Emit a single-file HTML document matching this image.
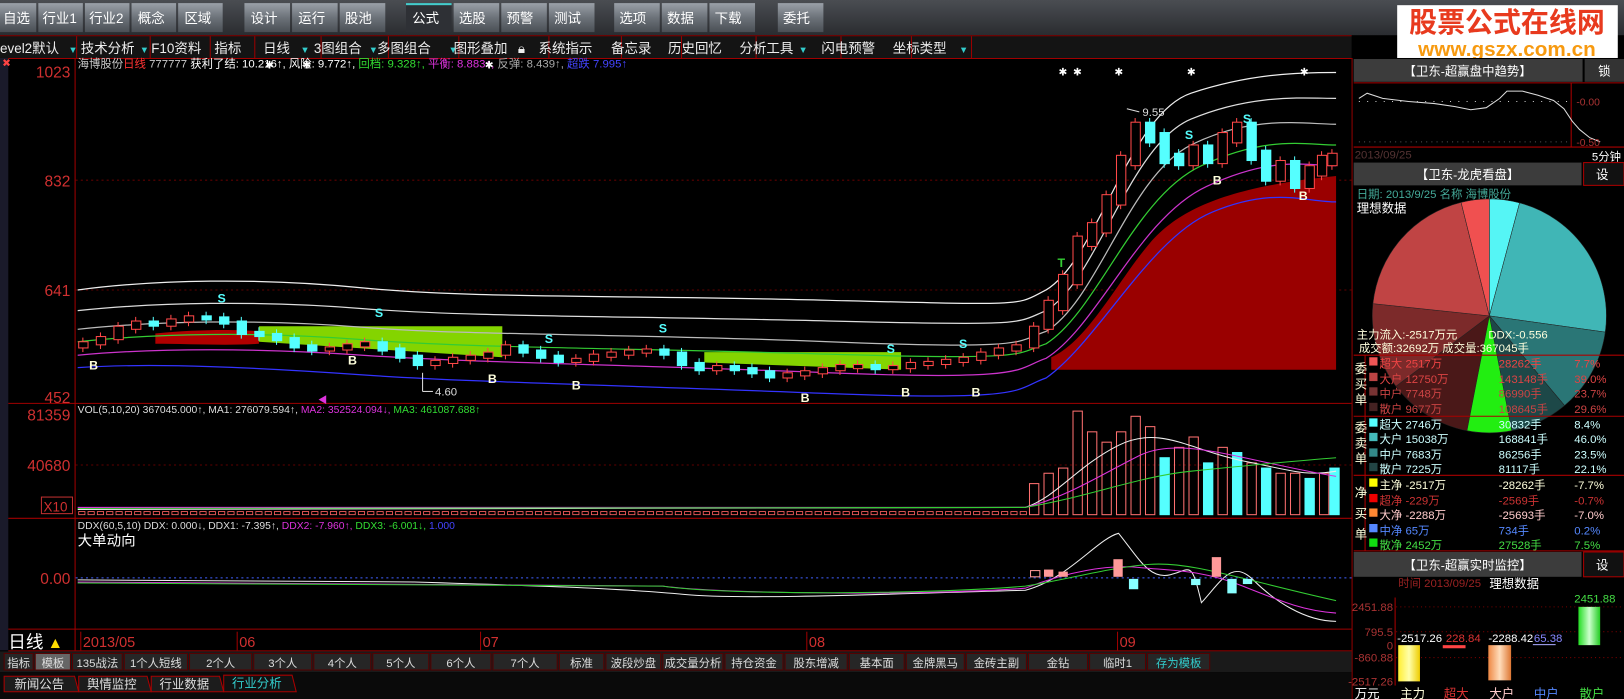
<!DOCTYPE html>
<html><head><meta charset="utf-8">
<style>
html,body{margin:0;padding:0;background:#000;overflow:hidden}
svg{display:block}
text{font-family:"Liberation Sans","Noto Sans CJK SC",sans-serif}
</style></head>
<body>
<svg id="s" width="1624" height="699" viewBox="0 0 1568 675" preserveAspectRatio="none" xmlns="http://www.w3.org/2000/svg">
<defs>
<linearGradient id="btn" x1="0" y1="0" x2="0" y2="1"><stop offset="0" stop-color="#9aa0a8"/><stop offset="0.5" stop-color="#6c7279"/><stop offset="1" stop-color="#4a4f55"/></linearGradient>
<linearGradient id="tb" x1="0" y1="0" x2="0" y2="1"><stop offset="0" stop-color="#4a4d52"/><stop offset="1" stop-color="#2a2c30"/></linearGradient>
<linearGradient id="yb" x1="0" y1="0" x2="1" y2="0"><stop offset="0" stop-color="#ffee33"/><stop offset="0.5" stop-color="#ffffaa"/><stop offset="1" stop-color="#eecc00"/></linearGradient>
<linearGradient id="ob" x1="0" y1="0" x2="1" y2="0"><stop offset="0" stop-color="#ee8844"/><stop offset="0.5" stop-color="#ffddbb"/><stop offset="1" stop-color="#dd7733"/></linearGradient>
<linearGradient id="gb" x1="0" y1="0" x2="1" y2="0"><stop offset="0" stop-color="#22dd22"/><stop offset="0.5" stop-color="#ccffcc"/><stop offset="1" stop-color="#22cc22"/></linearGradient>
</defs>
<!-- top toolbar -->
<rect x="0" y="0" width="1568" height="34" fill="url(#tb)"/>
<g font-size="13" fill="#fff">
<rect x="0" y="3" width="35" height="28" fill="url(#btn)"/><text x="3" y="22">自选</text>
<rect x="37" y="3" width="43" height="28" fill="url(#btn)"/><text x="41" y="22">行业1</text>
<rect x="82" y="3" width="43" height="28" fill="url(#btn)"/><text x="86" y="22">行业2</text>
<rect x="127" y="3" width="43" height="28" fill="url(#btn)"/><text x="133" y="22">概念</text>
<rect x="172" y="3" width="43" height="28" fill="url(#btn)"/><text x="178" y="22">区域</text>
<rect x="236" y="3" width="44" height="28" fill="url(#btn)"/><text x="242" y="22">设计</text>
<rect x="282" y="3" width="44" height="28" fill="url(#btn)"/><text x="288" y="22">运行</text>
<rect x="328" y="3" width="44" height="28" fill="url(#btn)"/><text x="333" y="22">股池</text>
<rect x="392" y="3" width="44" height="28" fill="#2e3035"/><rect x="392" y="3" width="44" height="2" fill="#4cc"/><text x="398" y="22">公式</text>
<rect x="438" y="3" width="44" height="28" fill="url(#btn)"/><text x="443" y="22">选股</text>
<rect x="484" y="3" width="44" height="28" fill="url(#btn)"/><text x="489" y="22">预警</text>
<rect x="530" y="3" width="44" height="28" fill="url(#btn)"/><text x="535" y="22">测试</text>
<rect x="593" y="3" width="44" height="28" fill="url(#btn)"/><text x="598" y="22">选项</text>
<rect x="639" y="3" width="44" height="28" fill="url(#btn)"/><text x="644" y="22">数据</text>
<rect x="685" y="3" width="44" height="28" fill="url(#btn)"/><text x="690" y="22">下载</text>
<rect x="751" y="3" width="44" height="28" fill="url(#btn)"/><text x="756" y="22">委托</text>
</g>
<!-- logo -->
<rect x="1349" y="5" width="213" height="53" fill="#fff"/>
<text x="1455" y="31" font-size="27" font-weight="bold" fill="#e83a1e" text-anchor="middle">股票公式在线网</text>
<text x="1455" y="54" font-size="20" font-weight="bold" fill="#f79a10" text-anchor="middle">www.gszx.com.cn</text>
<!-- second toolbar -->
<rect x="0" y="34" width="1305" height="22" fill="#141414"/>
<line x1="0" y1="34.5" x2="1305" y2="34.5" stroke="#800" />
<g stroke="#900">
<line x1="74" y1="35" x2="74" y2="56"/><line x1="145" y1="35" x2="145" y2="56"/><line x1="203" y1="35" x2="203" y2="56"/><line x1="246" y1="35" x2="246" y2="56"/><line x1="310" y1="35" x2="310" y2="56"/><line x1="375" y1="35" x2="375" y2="56"/><line x1="443" y1="35" x2="443" y2="56"/><line x1="530" y1="35" x2="530" y2="56"/><line x1="600" y1="35" x2="600" y2="56"/><line x1="658" y1="35" x2="658" y2="56"/><line x1="730" y1="35" x2="730" y2="56"/><line x1="812" y1="35" x2="812" y2="56"/><line x1="880" y1="35" x2="880" y2="56"/><line x1="938" y1="35" x2="938" y2="56"/>
</g>
<g font-size="13" fill="#eee">
<text x="0" y="51">evel2默认</text><text x="66" y="51" fill="#3cc" font-size="9">▼</text>
<text x="78" y="51">技术分析</text><text x="135" y="51" fill="#3cc" font-size="9">▼</text>
<text x="146" y="51">F10资料</text>
<text x="207" y="51">指标</text>
<text x="254" y="51">日线</text><text x="290" y="51" fill="#3cc" font-size="9">▼</text>
<text x="303" y="51">3图组合</text><text x="356" y="51" fill="#3cc" font-size="9">▼</text>
<text x="364" y="51">多图组合</text><text x="433" y="51" fill="#3cc" font-size="9">▼</text>
<text x="438" y="51">图形叠加</text><text x="500" y="51">🔒︎</text>
<text x="520" y="51">系统指示</text>
<text x="590" y="51">备忘录</text>
<text x="645" y="51">历史回忆</text>
<text x="714" y="51">分析工具</text><text x="771" y="51" fill="#3cc" font-size="9">▼</text>
<text x="793" y="51">闪电预警</text>
<text x="862" y="51">坐标类型</text><text x="926" y="51" fill="#3cc" font-size="9">▼</text>
</g>
<!-- main frame -->
<rect x="0" y="56" width="8" height="572" fill="#1a1a2a"/>
<g stroke="#a00000" fill="none">
<line x1="72.5" y1="56" x2="72.5" y2="628"/>
<line x1="1305.5" y1="56" x2="1305.5" y2="692"/>
<line x1="8" y1="389.5" x2="1305" y2="389.5"/>
<line x1="8" y1="500.5" x2="1305" y2="500.5"/>
<line x1="8" y1="607.5" x2="1305" y2="607.5"/>
<line x1="8" y1="628.5" x2="1305" y2="628.5"/>
<line x1="8" y1="56.5" x2="1305" y2="56.5"/>
</g>
<g stroke="#600000" stroke-dasharray="2 3">
<line x1="73" y1="174" x2="1305" y2="174"/><line x1="73" y1="280" x2="1305" y2="280"/><line x1="73" y1="449" x2="1305" y2="449"/><line x1="73" y1="558" x2="1305" y2="558" stroke="#4060ff"/>
</g>
<g font-size="15" fill="#d03030" text-anchor="end">
<text x="68" y="75">1023</text><text x="68" y="180">832</text><text x="68" y="286">641</text><text x="68" y="389">452</text>
<text x="68" y="406">81359</text><text x="68" y="455">40680</text><text x="68" y="564">0.00</text>
</g>
<rect x="40" y="480" width="30" height="16" fill="none" stroke="#c03030"/><text x="42" y="494" font-size="13" fill="#d03030">X10</text>
<text x="2" y="64" font-size="10" fill="#f44">✖</text>
<!-- info lines -->
<text x="75" y="65" font-size="11" fill="#ccc">海博股份<tspan fill="#f33">日线</tspan> 777777 <tspan fill="#fff">获利了结: 10.216↑, 风险: 9.772↑, </tspan><tspan fill="#3d3">回档: 9.328↑, </tspan><tspan fill="#d3d">平衡: 8.883↑, </tspan><tspan fill="#aaa">反弹: 8.439↑, </tspan><tspan fill="#44f">超跌 7.995↑</tspan></text>
<text x="75" y="399" font-size="10" fill="#ddd">VOL(5,10,20) 367045.000↑, MA1: 276079.594↑, <tspan fill="#d3d">MA2: 352524.094↓, </tspan><tspan fill="#3d3">MA3: 461087.688↑</tspan></text>
<text x="75" y="511" font-size="10" fill="#ddd">DDX(60,5,10) DDX: 0.000↓, DDX1: -7.395↑, <tspan fill="#d3d">DDX2: -7.960↑, </tspan><tspan fill="#3d3">DDX3: -6.001↓, </tspan><tspan fill="#44f">1.000</tspan></text>
<text x="75" y="527" font-size="14" fill="#fff">大单动向</text>
<!-- areas -->
<path d="M150,322 C190,318 230,318 250,320 L250,332 C220,334 180,332 150,332Z" fill="#b00000"/>
<path d="M250,315 L485,315 L485,345 L250,330Z" fill="#84d400"/>
<path d="M680,340 L870,340 L870,357 L680,350Z" fill="#84d400"/>
<path d="M1015,357 L1015,345 C1050,330 1080,270 1110,235 S1190,180 1290,170 L1290,357 Z" fill="#9a0000"/>
<g fill="none" stroke-width="1.2">
<path d="M75,280 C150,270 250,268 350,278 S600,285 800,290 S980,295 1010,280 C1060,250 1090,110 1150,90 S1260,70 1290,70" stroke="#eee"/>
<path d="M75,300 C150,292 250,290 350,298 S600,305 800,310 S980,312 1010,300 C1060,270 1090,140 1150,115 S1260,95 1290,95" stroke="#ddd"/>
<path d="M75,318 C150,310 250,308 350,316 S600,322 800,330 S980,330 1010,320 C1060,290 1090,170 1150,140 S1260,120 1290,120" stroke="#bbb"/>
<path d="M75,330 C150,322 250,320 350,328 S600,336 800,342 S980,342 1010,332 C1060,300 1095,190 1160,160 S1260,140 1290,140" stroke="#3c3"/>
<path d="M75,343 C150,336 250,336 350,343 S600,352 800,360 S980,356 1010,346 C1060,315 1100,210 1165,180 S1260,160 1290,160" stroke="#c3c"/>
<path d="M75,355 C150,350 250,355 350,362 S600,372 800,380 S980,375 1010,365 C1060,330 1110,230 1170,205 S1260,195 1290,195" stroke="#33f"/>
</g>
<g id="candles"></g>
<g font-size="12" font-weight="bold">
<g fill="#5ff"><text x="210" y="292">S</text><text x="362" y="306">S</text><text x="526" y="331">S</text><text x="636" y="321">S</text><text x="856" y="341">S</text><text x="926" y="336">S</text><text x="1144" y="134">S</text><text x="1200" y="119">S</text></g>
<g fill="#ffd"><text x="86" y="357">B</text><text x="336" y="352">B</text><text x="471" y="370">B</text><text x="552" y="376">B</text><text x="773" y="388">B</text><text x="870" y="383">B</text><text x="938" y="383">B</text><text x="1171" y="178">B</text><text x="1254" y="193">B</text></g>
<text x="1021" y="258" fill="#3c3">T</text>
</g>
<g fill="#fff" font-size="10"><text x="1022" y="73">✱</text><text x="1036" y="73">✱</text><text x="1076" y="73">✱</text><text x="1146" y="73">✱</text><text x="1255" y="73">✱</text><text x="256" y="66">✱</text><text x="292" y="66">✱</text><text x="468" y="66">✱</text></g>
<text x="1103" y="112" font-size="11" fill="#ddd">9.55</text><line x1="1088" y1="105" x2="1100" y2="108" stroke="#ddd"/>
<text x="420" y="382" font-size="11" fill="#ddd">4.60</text><line x1="408" y1="378" x2="418" y2="378" stroke="#ddd"/><line x1="408" y1="360" x2="408" y2="378" stroke="#ddd"/>
<text x="307" y="389" font-size="9" fill="#d3d">◀</text>
<g id="vols"></g>
<g fill="none" stroke-width="1">
<path d="M75,492 L990,490 C1020,480 1040,450 1080,430 S1150,435 1200,445 S1260,460 1290,455" stroke="#eee"/>
<path d="M75,490 L990,490 C1030,480 1060,460 1100,440 S1200,445 1290,460" stroke="#d3d"/>
<path d="M75,491 L990,490 C1050,480 1100,460 1150,455 S1250,445 1290,442" stroke="#3c3"/>
</g>
<g fill="none" stroke-width="1">
<path d="M75,560 L400,562 C500,565 600,568 660,574 S900,572 990,570 C1030,560 1060,520 1080,515 C1100,540 1110,560 1130,555 S1150,540 1160,582 C1180,560 1190,540 1210,560 S1260,600 1290,600" stroke="#eee"/>
<path d="M75,562 L640,566 C700,574 900,575 990,568 C1030,552 1070,545 1100,548 S1160,550 1200,566 S1260,590 1290,592" stroke="#d3d"/>
<path d="M75,563 L640,566 C700,575 900,574 990,566 C1030,560 1070,548 1110,545 S1200,560 1290,580" stroke="#3c3"/>
</g>
<g fill="#f99"><rect x="995" y="551" width="9" height="6" fill="none" stroke="#f99"/><rect x="1008" y="550" width="9" height="7"/><rect x="1022" y="552" width="9" height="5"/><rect x="1075" y="540" width="9" height="17"/><rect x="1170" y="538" width="9" height="19"/></g>
<g fill="#8ff"><rect x="1090" y="559" width="9" height="10"/><rect x="1185" y="559" width="9" height="14"/><rect x="1200" y="559" width="9" height="5"/><rect x="1150" y="559" width="9" height="6"/></g>
<!-- date row -->
<text x="8" y="626" font-size="17" fill="#fff">日线</text><text x="46" y="626" font-size="15" fill="#fd0">▲</text>
<g fill="#d03030" font-size="14"><text x="80" y="625">2013/05</text><text x="231" y="625">06</text><text x="466" y="625">07</text><text x="781" y="625">08</text><text x="1081" y="625">09</text></g>
<g stroke="#a00000"><line x1="78" y1="610" x2="78" y2="628"/><line x1="229" y1="610" x2="229" y2="628"/><line x1="464" y1="610" x2="464" y2="628"/><line x1="779" y1="610" x2="779" y2="628"/><line x1="1079" y1="610" x2="1079" y2="628"/></g>
<!-- buttons row -->
<rect x="0" y="629" width="1305" height="20" fill="#1a1a1a"/>
<g id="btns" font-size="11" fill="#ddd"></g>
<rect x="0" y="649" width="1305" height="26" fill="#0a0a0a"/>
<g font-size="12" fill="#ddd">
<path d="M4,668 L4,653 L72,653 L76,668Z" fill="#1c1c1c" stroke="#a00"/><text x="14" y="665">新闻公告</text>
<path d="M76,668 L76,653 L142,653 L146,668Z" fill="#1c1c1c" stroke="#a00"/><text x="84" y="665">舆情监控</text>
<path d="M146,668 L146,653 L212,653 L216,668Z" fill="#1c1c1c" stroke="#a00"/><text x="154" y="665">行业数据</text>
<path d="M216,668 L216,652 L282,652 L286,668Z" fill="#111" stroke="#a00"/><text x="224" y="664" fill="#3cc">行业分析</text>
</g>
<!-- right panel -->
<rect x="1306" y="56" width="262" height="619" fill="#000"/>
<rect x="1307" y="57" width="221" height="22" fill="#3c3c3c"/><text x="1417" y="73" font-size="12" fill="#fff" text-anchor="middle">【卫东-超赢盘中趋势】</text>
<rect x="1530" y="57" width="38" height="22" fill="#333"/><text x="1543" y="73" font-size="12" fill="#fff">锁</text>
<line x1="1307" y1="80" x2="1568" y2="80" stroke="#a00"/>
<line x1="1517" y1="80" x2="1517" y2="142" stroke="#a00"/>
<path d="M1312,95 L1320,90 L1335,95 L1360,98 L1385,100 L1405,103 L1420,106 L1435,104 L1448,95 L1455,88 L1470,88 L1485,92 L1500,97 L1510,105 L1518,117 L1525,125 L1535,133 L1545,137" fill="none" stroke="#ddd"/>
<line x1="1312" y1="98" x2="1517" y2="98" stroke="#ccc" stroke-dasharray="1 7"/>
<line x1="1312" y1="137" x2="1517" y2="137" stroke="#555" stroke-dasharray="1 4"/>
<text x="1522" y="102" font-size="10" fill="#a33">-0.00</text><text x="1522" y="141" font-size="10" fill="#a33">-0.50</text>
<line x1="1307" y1="142" x2="1568" y2="142" stroke="#a00"/>
<text x="1308" y="153" font-size="11" fill="#533">2013/09/25</text><text x="1537" y="155" font-size="11" fill="#fff">5分钟</text>
<rect x="1307" y="157" width="220" height="22" fill="#3c3c3c"/><text x="1417" y="173" font-size="12" fill="#fff" text-anchor="middle">【卫东-龙虎看盘】</text>
<rect x="1529" y="157" width="39" height="22" fill="#111" stroke="#a00"/><text x="1541" y="173" font-size="12" fill="#fff">设</text>
<text x="1310" y="191" font-size="11" fill="#4a9">日期: 2013/9/25  名称 海博股份</text>
<text x="1310" y="205" font-size="12" fill="#fff">理想数据</text>
<g stroke="#222" stroke-width="0.5">
<path d="M1438,305 L1438,192 A113,113 0 0 1 1467.2,195.9Z" fill="#55f5f5"/>
<path d="M1438,305 L1467.2,195.9 A113,113 0 0 1 1549.9,320.7Z" fill="#40b6b6"/>
<path d="M1438,305 L1549.9,320.7 A113,113 0 0 1 1510.6,391.6Z" fill="#2a7676"/>
<path d="M1438,305 L1510.6,391.6 A113,113 0 0 1 1438,418Z" fill="#1d4848"/>
<path d="M1438,305 L1438,418 A113,113 0 0 1 1347.8,373Z" fill="#4a1818"/>
<path d="M1438,305 L1347.8,373 A113,113 0 0 1 1325.6,293.2Z" fill="#7c2a2a"/>
<path d="M1438,305 L1325.6,293.2 A113,113 0 0 1 1410.7,195.4Z" fill="#c04444"/>
<path d="M1438,305 L1410.7,195.4 A113,113 0 0 1 1438,192Z" fill="#f05050"/>
<path d="M1438,305 L1459.6,415.9 A113,113 0 0 1 1416.4,415.9Z" fill="#22ee11"/>
</g>
<g font-size="11">
<text x="1310" y="327" fill="#ffd">主力流入:-2517万元</text><text x="1437" y="327" fill="#ffd">DDX:-0.556</text>
<text x="1312" y="340" fill="#ffd">成交额:32692万  成交量:367045手</text>
</g>
<g stroke="#a00"><line x1="1307" y1="343" x2="1568" y2="343"/><line x1="1307" y1="402" x2="1568" y2="402"/><line x1="1307" y1="459" x2="1568" y2="459"/><line x1="1307" y1="532" x2="1568" y2="532"/><line x1="1318" y1="343" x2="1318" y2="532"/></g>
<g font-size="12" fill="#ffd"><text x="1308" y="360">委</text><text x="1308" y="375">买</text><text x="1308" y="390">单</text><text x="1308" y="417">委</text><text x="1308" y="432">卖</text><text x="1308" y="447">单</text><text x="1308" y="480">净</text><text x="1308" y="500">买</text><text x="1308" y="520">单</text></g>
<g font-size="11">
<g fill="#e44"><rect x="1322" y="345" width="8" height="8" fill="#e55"/><text x="1332" y="355">超大 2517万</text><text x="1447" y="355">28262手</text><text x="1520" y="355">7.7%</text></g>
<g fill="#d44"><rect x="1322" y="360" width="8" height="8" fill="#b44"/><text x="1332" y="370">大户 12750万</text><text x="1447" y="370">143148手</text><text x="1520" y="370">39.0%</text></g>
<g fill="#c44"><rect x="1322" y="374" width="8" height="8" fill="#733"/><text x="1332" y="384">中户 7748万</text><text x="1447" y="384">86990手</text><text x="1520" y="384">23.7%</text></g>
<g fill="#c44"><rect x="1322" y="389" width="8" height="8" fill="#422"/><text x="1332" y="399">散户 9677万</text><text x="1447" y="399">108645手</text><text x="1520" y="399">29.6%</text></g>
<g fill="#cff"><rect x="1322" y="404" width="8" height="8" fill="#5ff"/><text x="1332" y="414">超大 2746万</text><text x="1447" y="414">30832手</text><text x="1520" y="414">8.4%</text></g>
<g fill="#cff"><rect x="1322" y="418" width="8" height="8" fill="#4bb"/><text x="1332" y="428">大户 15038万</text><text x="1447" y="428">168841手</text><text x="1520" y="428">46.0%</text></g>
<g fill="#cff"><rect x="1322" y="433" width="8" height="8" fill="#388"/><text x="1332" y="443">中户 7683万</text><text x="1447" y="443">86256手</text><text x="1520" y="443">23.5%</text></g>
<g fill="#cff"><rect x="1322" y="447" width="8" height="8" fill="#244"/><text x="1332" y="457">散户 7225万</text><text x="1447" y="457">81117手</text><text x="1520" y="457">22.1%</text></g>
<g fill="#ffd"><rect x="1322" y="462" width="8" height="8" fill="#ff0"/><text x="1332" y="472">主净 -2517万</text><text x="1447" y="472">-28262手</text><text x="1520" y="472">-7.7%</text></g>
<g fill="#c33"><rect x="1322" y="477" width="8" height="8" fill="#e00"/><text x="1332" y="487">超净 -229万</text><text x="1447" y="487">-2569手</text><text x="1520" y="487">-0.7%</text></g>
<g fill="#fcc"><rect x="1322" y="491" width="8" height="8" fill="#f83"/><text x="1332" y="501">大净 -2288万</text><text x="1447" y="501">-25693手</text><text x="1520" y="501">-7.0%</text></g>
<g fill="#58f"><rect x="1322" y="506" width="8" height="8" fill="#58f"/><text x="1332" y="516">中净 65万</text><text x="1447" y="516">734手</text><text x="1520" y="516">0.2%</text></g>
<g fill="#4d4"><rect x="1322" y="520" width="8" height="8" fill="#1d1"/><text x="1332" y="530">散净 2452万</text><text x="1447" y="530">27528手</text><text x="1520" y="530">7.5%</text></g>
</g>
<rect x="1307" y="533" width="220" height="24" fill="#3c3c3c"/><text x="1417" y="550" font-size="12" fill="#fff" text-anchor="middle">【卫东-超赢实时监控】</text>
<rect x="1529" y="533" width="39" height="24" fill="#111" stroke="#a00"/><text x="1541" y="550" font-size="12" fill="#fff">设</text>
<text x="1350" y="567" font-size="11" fill="#922">时间  2013/09/25</text><text x="1438" y="568" font-size="12" fill="#fff">理想数据</text>
<g stroke="#700" stroke-dasharray="1 3"><line x1="1348" y1="586" x2="1568" y2="586"/><line x1="1348" y1="610" x2="1568" y2="610"/><line x1="1348" y1="635" x2="1568" y2="635"/></g>
<line x1="1347" y1="577" x2="1347" y2="662" stroke="#a00"/>
<g font-size="11" fill="#a33" text-anchor="end"><text x="1345" y="590">2451.88</text><text x="1345" y="614">795.5</text><text x="1345" y="627">0</text><text x="1345" y="639">-860.88</text><text x="1345" y="662">-2517.26</text></g>
<rect x="1350" y="623" width="21" height="35" fill="url(#yb)"/>
<rect x="1393" y="623" width="22" height="3" fill="#f44"/>
<rect x="1437" y="623" width="22" height="34" fill="url(#ob)"/>
<rect x="1480" y="622" width="22" height="1" fill="#aaf"/>
<rect x="1524" y="586" width="21" height="37" fill="url(#gb)"/>
<g font-size="11"><text x="1349" y="620" fill="#fff">-2517.26</text><text x="1396" y="620" fill="#d33">228.84</text><text x="1437" y="620" fill="#fff">-2288.42</text><text x="1481" y="620" fill="#88f">65.38</text><text x="1520" y="582" fill="#4d4">2451.88</text></g>
<g font-size="12"><text x="1308" y="674" fill="#fff">万元</text><text x="1352" y="674" fill="#ffd">主力</text><text x="1394" y="674" fill="#d33">超大</text><text x="1438" y="674" fill="#fcc">大户</text><text x="1481" y="674" fill="#58f">中户</text><text x="1525" y="674" fill="#4d4">散户</text></g>
</svg>
<script>
(function(){
var NS="http://www.w3.org/2000/svg";
function el(p,t,a,txt){var e=document.createElementNS(NS,t);for(var k in a)e.setAttribute(k,a[k]);if(txt)e.textContent=txt;p.appendChild(e);return e;}
var pts=[[80,330],[97,325],[114,315],[131,310],[148,312],[165,308],[182,305],[199,306],[216,310],[233,320],[250,322],[267,326],[284,333],[301,336],[318,335],[335,332],[352,330],[369,336],[386,343],[403,350],[420,348],[437,345],[454,343],[471,340],[488,333],[505,338],[522,343],[539,347],[556,346],[573,342],[590,340],[607,338],[624,337],[641,340],[658,350],[675,355],[692,353],[709,355],[726,358],[743,362],[760,360],[777,358],[794,355],[811,352],[828,352],[845,354],[862,353],[879,350],[896,349],[913,347],[930,345],[947,340],[964,336],[981,333],[998,315],[1012,290],[1026,265],[1040,228],[1054,215],[1068,188],[1082,150],[1096,118],[1110,128],[1124,148],[1138,150],[1152,140],[1166,148],[1180,128],[1194,118],[1208,145],[1222,165],[1236,155],[1250,172],[1264,160],[1276,150],[1286,148]];
var g=document.getElementById("candles");
for(var i=0;i<pts.length;i++){var cx=pts[i][0],cy=pts[i][1],prev=i?pts[i-1][1]:cy+3,up=cy<=prev,h=Math.max(4,Math.abs(prev-cy)+(i>55?10:3));
var ty=up?cy:prev,c=up?"#ff4848":"#55ffff";
el(g,"line",{x1:cx,y1:ty-4,x2:cx,y2:ty+h+4,stroke:c});
el(g,"rect",{x:cx-4,y:ty,width:9,height:h,fill:up?"#000":c,stroke:c});}
var v=document.getElementById("vols");
for(var vx=76;vx<990;vx+=9){var vh=2+((vx*7)%9);var up2=(vx%3)!=0;var vc=up2?"#ff6060":"#55ffff";el(v,"rect",{x:vx,y:497-vh,width:6,height:vh,fill:up2?"none":vc,stroke:vc,"stroke-width":0.8});}
var big=[[994,30,0],[1008,40,0],[1022,45,0],[1036,100,0],[1050,80,0],[1064,70,0],[1078,80,0],[1092,95,0],[1106,85,0],[1120,55,1],[1134,65,0],[1148,75,0],[1162,50,1],[1176,65,0],[1190,60,1],[1204,50,0],[1218,45,1],[1232,40,0],[1246,40,0],[1260,35,1],[1274,40,0],[1284,45,1]];
big.forEach(function(b){var c=b[2]?"#55ffff":"#ff7070";el(v,"rect",{x:b[0],y:497-b[1],width:9,height:b[1],fill:b[2]?c:"none",stroke:c});});
var names=["指标","模板","135战法","1个人短线","2个人","3个人","4个人","5个人","6个人","7个人","标准","波段炒盘","成交量分析","持仓资金","股东增减","基本面","金牌黑马","金砖主副","金钻","临时1","存为模板"];
var xs=[4,34,70,120,183,245,303,360,416,476,540,585,640,700,758,820,875,933,993,1052,1108,1170];
var bb=document.getElementById("btns");
for(var j=0;j<names.length;j++){var x0=xs[j],x1=xs[j+1]-2;el(bb,"rect",{x:x0,y:631,width:x1-x0,height:16,fill:j==1?"#666":"#262626",stroke:"#500"});
el(bb,"text",{x:(x0+x1)/2,y:644,"text-anchor":"middle",fill:j==names.length-1?"#3cc":"#ddd"},names[j]);}
})();
</script>
</body></html>
